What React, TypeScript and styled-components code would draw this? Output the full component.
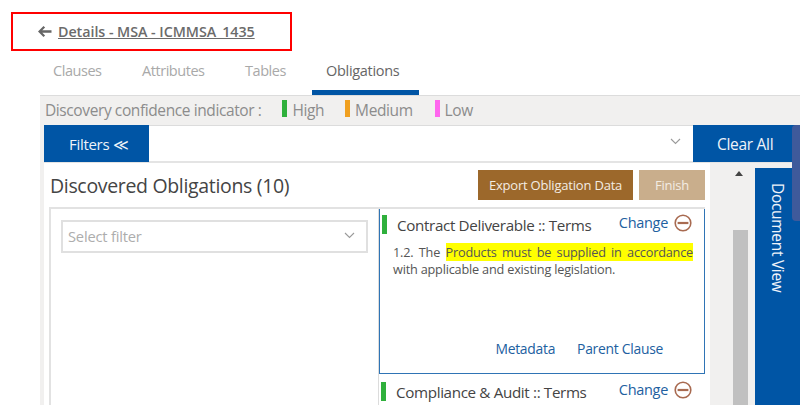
import React from "react";
import styled, { createGlobalStyle } from "styled-components";

const Global = createGlobalStyle`
  html, body { margin: 0; padding: 0; background: #fff; }
  body { font-family: "Open Sans", "Noto Sans", sans-serif; }
  * { box-sizing: border-box; }
`;
const Page = styled.div`
  width: 800px; height: 405px; overflow: hidden; display: flex; flex-direction: column; background: #fff;
`;
const TitleBox = styled.div`
  margin: 12px 0 0 11px; width: 281px; height: 39px; border: 2px solid #f00;
  display: flex; align-items: center; padding-left: 24px; gap: 6px; flex: none;
`;
const TitleLink = styled.a`
  font-size: 14.3px; font-weight: 600; letter-spacing: -0.05px; color: #6b6b6b; text-decoration: underline; white-space: nowrap; margin-top: -1px;
`;
const Tabs = styled.div`
  margin-left: 40px; height: 44px; display: flex; flex: none;
`;
const Tab = styled.div<{ $active?: boolean; $w: number; $pad: number }>`
  width: ${p => p.$w}px; padding-left: ${p => p.$pad}px; font-size: 14.5px; letter-spacing: ${p => (p.$active ? "-0.3px" : "-0.45px")}; padding-top: 10px;
  color: ${p => (p.$active ? "#666" : "#a9a9a9")};
  border-bottom: 5px solid ${p => (p.$active ? "#0055a5" : "transparent")};
`;
const Panel = styled.div`
  margin-left: 40px; flex: 1; min-height: 0; background: #f1f0ef; border-top: 1px solid #dcdcdc; padding-left: 4px;
  display: flex; flex-direction: column;
`;
const Legend = styled.div`
  height: 29px; display: flex; align-items: center; font-size: 15.5px; letter-spacing: -0.4px; color: #8c8c8c; flex: none; white-space: nowrap; padding-bottom: 2px;
`;
const LegendLabel = styled.span`
  margin-right: 21px; margin-left: 1px;
`;
const LegendItem = styled.span<{ $c: string; $gap: number }>`
  display: inline-flex; align-items: center; gap: 5px; margin-right: ${p => p.$gap}px;
  &::before { content: ""; width: 5px; height: 17px; margin-top: -3px; background: ${p => p.$c}; }
`;
const FilterBar = styled.div`
  height: 38px; display: flex; background: #fff; border-top: 1px solid #dcdcdc; border-bottom: 2px solid #e4e4e4; flex: none;
`;
const BlueBtn = styled.div<{ $w: number; $size: number; $indent: number }>`
  width: ${p => p.$w}px; background: #0055a5; color: #eef3f9; font-size: ${p => p.$size}px; letter-spacing: -0.3px;
  display: flex; align-items: center; justify-content: flex-start; padding: 1px 0 0 ${p => p.$indent}px; flex: none; height: 37px; margin-top: -1px; white-space: nowrap;
`;
const FilterInput = styled.div`
  flex: 1; display: flex; align-items: center; justify-content: flex-end; padding: 0 12px 4px 0;
`;
const Body = styled.div`
  flex: 1; min-height: 0; display: flex;
`;
const Main = styled.div`
  width: 666px; background: #fff; flex: none; padding: 5px 5px 0 5px; display: flex; flex-direction: column;
`;
const HeadRow = styled.div`
  display: flex; align-items: center; height: 34px; flex: none; margin-bottom: 5px;
`;
const Heading = styled.div`
  font-size: 19.5px; letter-spacing: -0.33px; color: #444; margin-right: auto; padding-left: 1px; white-space: nowrap;
`;
const ActionBtn = styled.div<{ $w: number; $muted?: boolean }>`
  width: ${p => p.$w}px; height: 30px; margin-left: 6px; background: ${p => (p.$muted ? "#c9ae8c" : "#9c682b")};
  color: #f3ece3; font-size: 13px; font-weight: 500; letter-spacing: -0.2px; display: flex; align-items: center; justify-content: center; white-space: nowrap;
`;
const Split = styled.div`
  flex: 1; min-height: 0; display: flex; border-top: 2px solid #e2e2e2; border-left: 2px solid #e2e2e2;
`;
const FilterCol = styled.div`
  width: 328px; flex: none; padding: 11px 10px 0 10px; border-right: 1px solid #dcdcdc;
`;
const Select = styled.div`
  height: 33px; border: 2px solid #e0e0e0; display: flex; align-items: center; justify-content: space-between;
  padding: 0 11px 2px 5px; font-size: 14.7px; letter-spacing: -0.2px; color: #adadad;
`;
const Cards = styled.div`
  flex: 1; min-width: 0; overflow: hidden;
`;
const Card = styled.div<{ $open?: boolean }>`
  height: ${p => (p.$open ? "167px" : "auto")}; margin-top: -2px; position: relative; background: #fff;
  border: 1px solid ${p => (p.$open ? "#2f74b5" : "transparent")};
  padding: ${p => (p.$open ? "6px 12px 0 2px" : "6px 12px 0 1px")}; display: flex; flex-direction: column;
  & + & { margin-top: 0; }
`;
const CardHead = styled.div`
  display: flex; align-items: center; height: 20px;
`;
const Flag = styled.span`
  width: 5px; height: 19px; background: #2fb03c; flex: none; margin-right: 10px;
`;
const CardTitle = styled.div`
  font-size: 15.2px; font-weight: 500; letter-spacing: -0.35px; color: #444; margin-right: auto; white-space: nowrap; padding-top: 2px;
`;
const ChangeLink = styled.span`
  font-size: 14.5px; letter-spacing: -0.3px; color: #21609f; margin-right: 6px; margin-top: -4px;
`;
const MinusIcon = styled.svg`
  width: 18px; height: 18px; margin-top: -2px; flex: none;
`;
const Clause = styled.p`
  margin: 10px 0 0 11px; font-size: 12.7px; line-height: 16.5px; letter-spacing: -0.19px; color: #555; width: 300px;
  text-align: justify;
`;
const Mark = styled.mark`
  background: #ffff00; color: #555;
`;
const CardLinks = styled.div`
  margin-top: auto; margin-bottom: 15px; display: flex; justify-content: flex-end; gap: 22px; padding-right: 29px;
  font-size: 13.9px; letter-spacing: -0.28px; color: #21609f;
`;
const ScrollCol = styled.div`
  width: 45px; flex: none; position: relative; display: flex; justify-content: center; padding-left: 15px;
`;
const Arrow = styled.div`
  position: absolute; top: 8px; left: 25px; width: 0; height: 0;
  border-left: 4px solid transparent; border-right: 4px solid transparent; border-bottom: 5px solid #444;
`;
const Thumb = styled.div`
  width: 15px; height: 175px; margin-top: 67px; background: #c0c0c0; flex: none;
`;
const DocView = styled.div`
  flex: 1; margin-top: 5px; background: #0055a5; color: #eef3f9; font-size: 15.5px; letter-spacing: -0.3px;
  writing-mode: vertical-rl; display: flex; align-items: center; padding-top: 15px; white-space: nowrap;
`;
const EdgeScroll = styled.div`
  position: absolute; left: 792px; top: 125px; width: 8px; height: 96px; background: #3f5a9b; border-radius: 4px 0 0 4px;
`;

const Chevron = () => (
  <svg width="11" height="7" viewBox="0 0 11 7" fill="none"><path d="M1 1l4.5 4.5L10 1" stroke="#9a9a9a" strokeWidth="1.1" /></svg>
);
const Minus = () => (
  <MinusIcon viewBox="0 0 18 18" fill="none">
    <circle cx="9" cy="9" r="7.8" stroke="#a86a50" strokeWidth="1.6" />
    <rect x="3.6" y="7.9" width="10.8" height="2.2" fill="#a86a50" />
  </MinusIcon>
);

export default function App() {
  return (
    <Page>
      <Global />
      <TitleBox>
        <svg width="15" height="13" viewBox="0 0 15 12"><path d="M6.500 0.500L1 6l5.500 5.500 1.600-1.600L5.300 7.200H14.500V4.800H5.300L8.100 2.100z" fill="#666" /></svg>
        <TitleLink>Details - MSA - ICMMSA_1435</TitleLink>
      </TitleBox>
      <Tabs>
        <Tab $w={102} $pad={13}>Clauses</Tab>
        <Tab $w={103} $pad={0}>Attributes</Tab>
        <Tab $w={67} $pad={0}>Tables</Tab>
        <Tab $w={107} $pad={14} $active>Obligations</Tab>
      </Tabs>
      <Panel>
        <Legend>
          <LegendLabel>Discovery confidence indicator :</LegendLabel>
          <LegendItem $c="#2fb03c" $gap={21}>High</LegendItem>
          <LegendItem $c="#f0a020" $gap={22}>Medium</LegendItem>
          <LegendItem $c="#ff66ee" $gap={0}>Low</LegendItem>
        </Legend>
        <FilterBar>
          <BlueBtn $w={105} $size={15} $indent={25}>Filters ≪</BlueBtn>
          <FilterInput><Chevron /></FilterInput>
          <BlueBtn $w={107} $size={15.5} $indent={24}>Clear All</BlueBtn>
        </FilterBar>
        <Body>
          <Main>
            <HeadRow>
              <Heading>Discovered Obligations (10)</Heading>
              <ActionBtn $w={155}>Export Obligation Data</ActionBtn>
              <ActionBtn $w={66} $muted>Finish</ActionBtn>
            </HeadRow>
            <Split>
              <FilterCol>
                <Select>Select filter<Chevron /></Select>
              </FilterCol>
              <Cards>
                <Card $open>
                  <CardHead>
                    <Flag />
                    <CardTitle>Contract Deliverable :: Terms</CardTitle>
                    <ChangeLink>Change</ChangeLink>
                    <Minus />
                  </CardHead>
                  <Clause>1.2. The <Mark>Products must be supplied in accordance</Mark> with applicable and existing legislation.</Clause>
                  <CardLinks><span>Metadata</span><span>Parent Clause</span></CardLinks>
                </Card>
                <Card>
                  <CardHead>
                    <Flag />
                    <CardTitle>Compliance &amp; Audit :: Terms</CardTitle>
                    <ChangeLink>Change</ChangeLink>
                    <Minus />
                  </CardHead>
                </Card>
              </Cards>
            </Split>
          </Main>
          <ScrollCol><Arrow /><Thumb /></ScrollCol>
          <DocView>Document View</DocView>
        </Body>
      </Panel>
      <EdgeScroll />
    </Page>
  );
}
